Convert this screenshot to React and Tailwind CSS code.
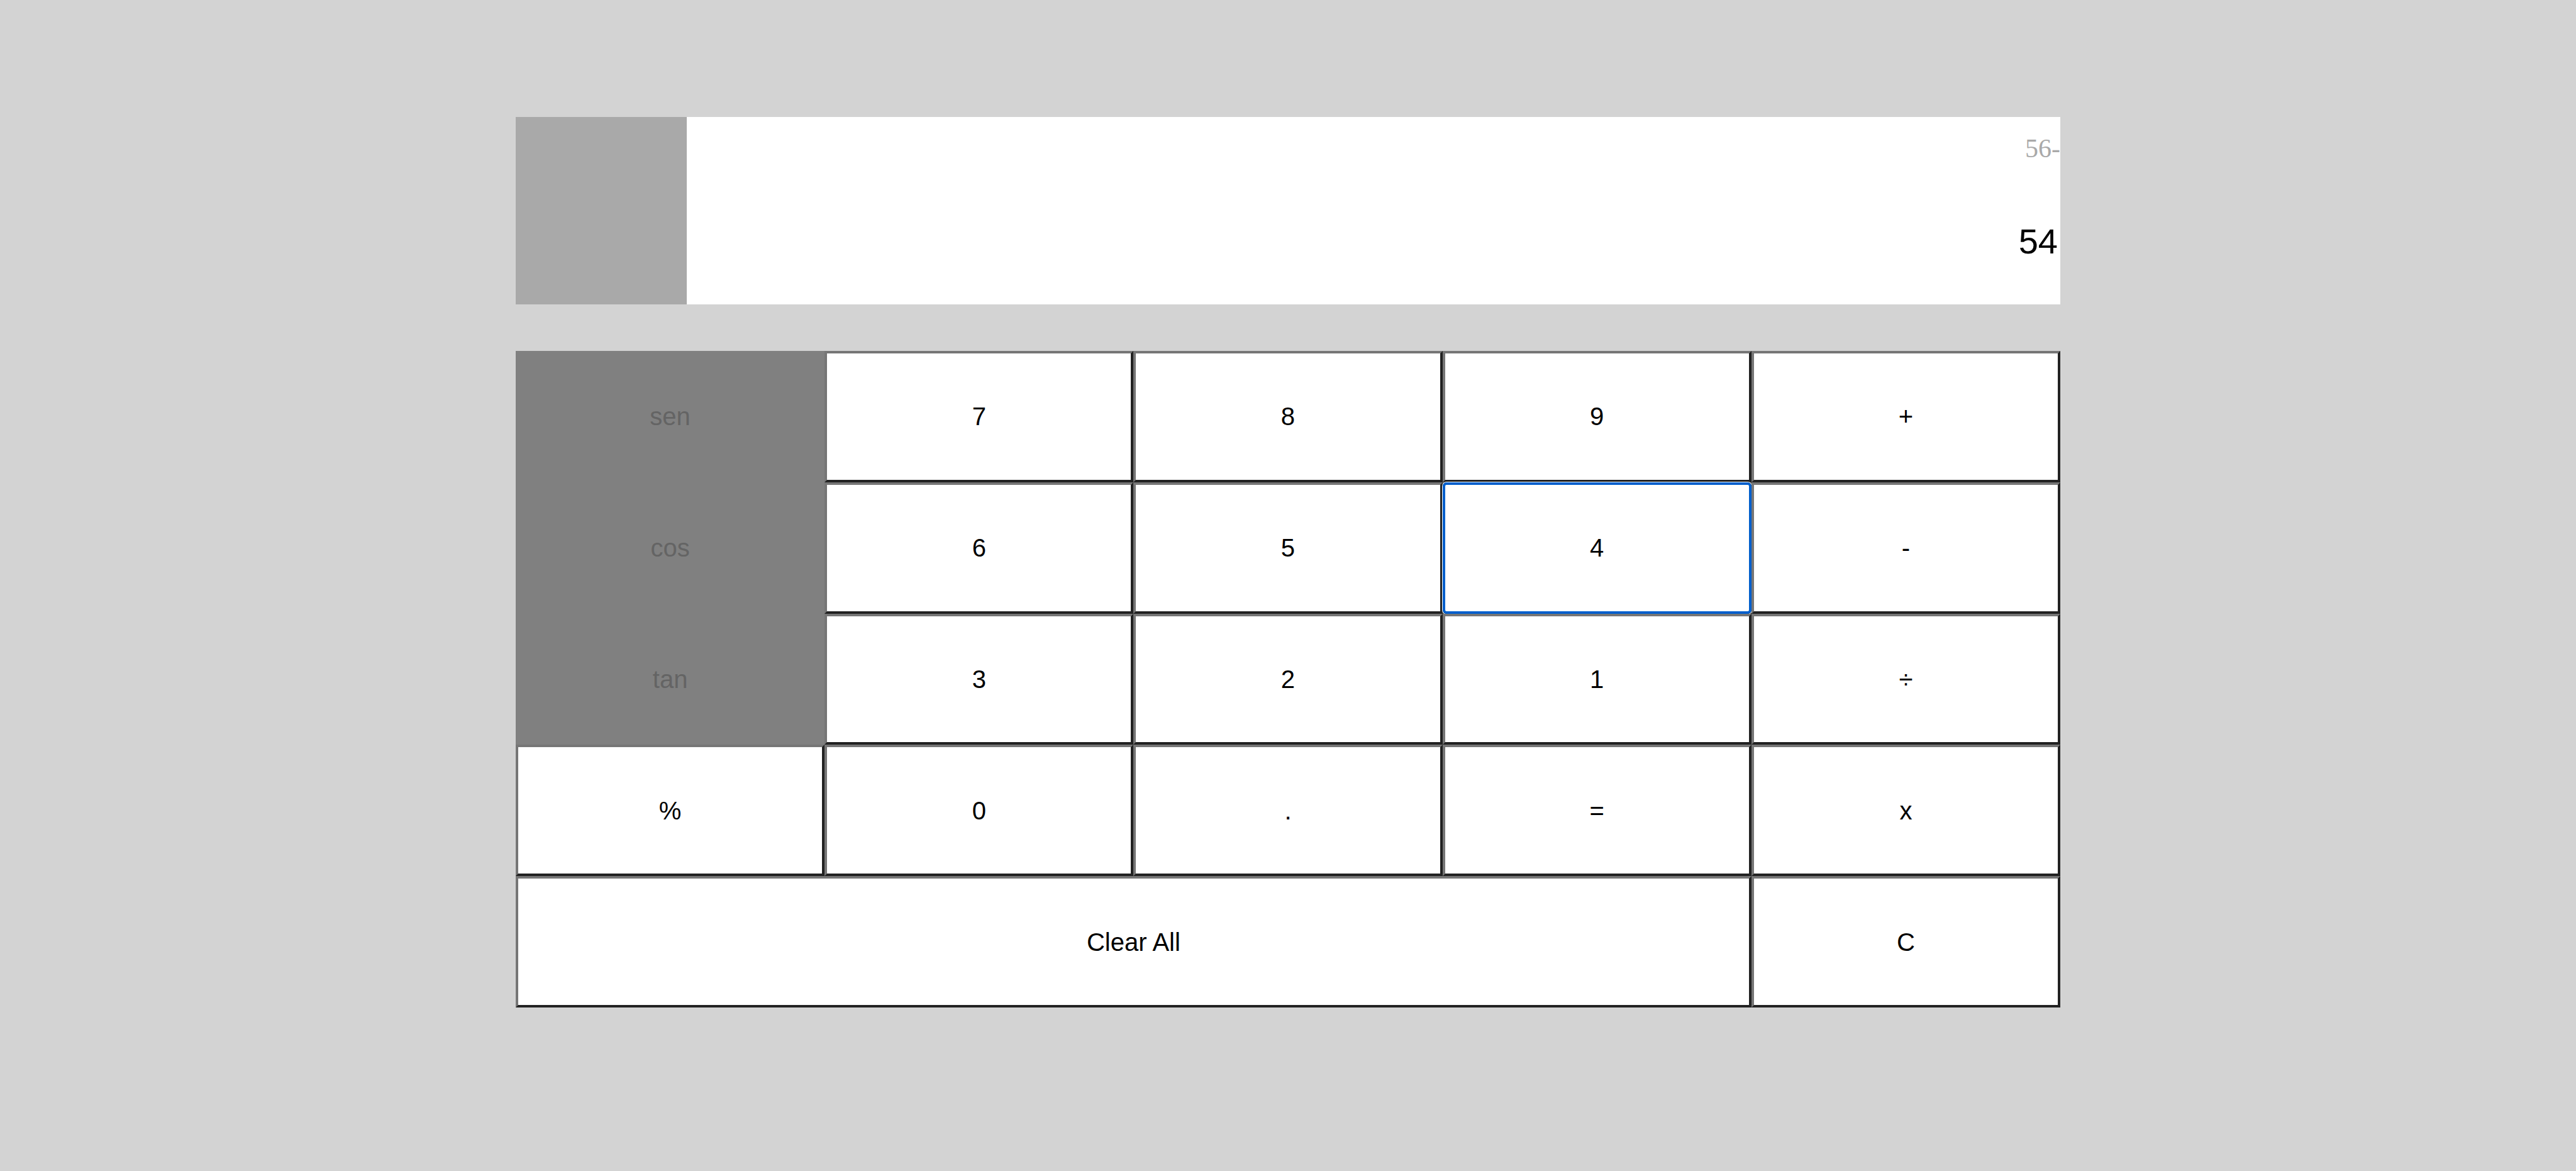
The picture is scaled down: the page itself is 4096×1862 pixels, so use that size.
import React from "react";

const keyBase =
  "relative flex items-center justify-center bg-white text-black text-[40px] font-['Liberation_Sans',Arial,sans-serif] border-4 border-solid border-t-[#767676] border-l-[#767676] border-b-[#222222] border-r-[#222222]";

const fnBase =
  "flex items-center justify-center bg-[#808080] text-[#646464] text-[40px] font-['Liberation_Sans',Arial,sans-serif]";

function Key({ label, className = "", focused = false }) {
  return (
    <button type="button" className={`${keyBase} ${className}`}>
      {label}
      {focused && (
        <span className="pointer-events-none absolute inset-[-4px] rounded-[6px] border-4 border-[#005fcc] shadow-[0_0_0_1px_#ffffff]" />
      )}
    </button>
  );
}

function FnKey({ label }) {
  return (
    <button type="button" className={fnBase}>
      {label}
    </button>
  );
}

export default function App() {
  return (
    <div className="min-h-[1862px] w-full bg-[#d3d3d3] pt-[186px]">
      <div className="mx-auto w-[2456px]">
        <div className="flex h-[298px] bg-white">
          <div className="w-[272px] bg-[#a9a9a9]" />
          <div className="flex flex-1 flex-col items-end">
            <div className="mt-[29px] pr-0 text-[42px] leading-none text-[#a9a9a9] font-['Liberation_Serif','Times_New_Roman',serif]">
              56-
            </div>
            <div className="mt-[99px] pr-[4px] text-[56px] leading-none text-black font-['Liberation_Sans',Arial,sans-serif]">
              54
            </div>
          </div>
        </div>

        <div className="mt-[74px] grid h-[1044px] grid-cols-5 grid-rows-5">
          <FnKey label="sen" />
          <Key label="7" />
          <Key label="8" />
          <Key label="9" />
          <Key label="+" />

          <FnKey label="cos" />
          <Key label="6" />
          <Key label="5" />
          <Key label="4" focused />
          <Key label="-" />

          <FnKey label="tan" />
          <Key label="3" />
          <Key label="2" />
          <Key label="1" />
          <Key label="÷" />

          <Key label="%" />
          <Key label="0" />
          <Key label="." />
          <Key label="=" />
          <Key label="x" />

          <Key label="Clear All" className="col-span-4" />
          <Key label="C" />
        </div>
      </div>
    </div>
  );
}
